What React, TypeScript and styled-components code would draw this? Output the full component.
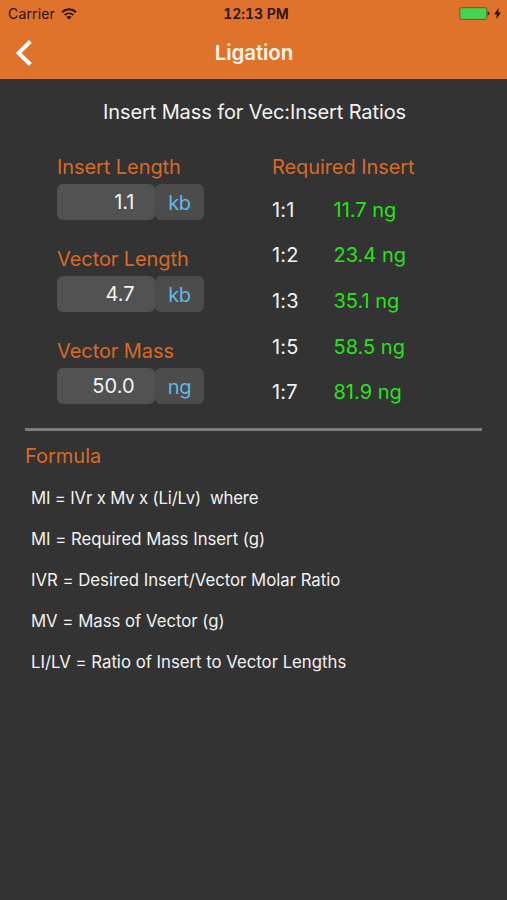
import React from 'react';
import styled, { createGlobalStyle } from 'styled-components';

const colors = {
  bar: '#df732c',
  page: '#333333',
  label: '#d96a26',
  text: '#f2f2f2',
  unit: '#5fb8ea',
  result: '#25e41a',
};

const GlobalStyle = createGlobalStyle`
  * { box-sizing: border-box; }
  body {
    margin: 0;
    background: ${colors.page};
    font-family: Inter, 'Liberation Sans', sans-serif;
    font-size: 20px;
    line-height: 24px;
    color: ${colors.text};
  }
`;

const Screen = styled.div`
  display: flex;
  flex-direction: column;
  width: 507px;
  height: 900px;
  overflow: hidden;
  background: ${colors.page};
`;

const Header = styled.header`
  height: 79px;
  flex: none;
  background: ${colors.bar};
`;

const StatusBar = styled.div`
  display: grid;
  grid-template-columns: 1fr auto 1fr;
  align-items: center;
  height: 27px;
  padding: 0 6px 0 8px;
  font-size: 14px;
  line-height: 18px;
  color: #2a1206;
`;

const Carrier = styled.div`
  display: flex;
  align-items: center;
  gap: 6px;
  letter-spacing: 0.15px;
`;

const Clock = styled.time`
  font-weight: 600;
  letter-spacing: -0.05px;
  font-variant-numeric: tabular-nums;
  padding-left: 3px;
`;

const Power = styled.div`
  display: flex;
  align-items: center;
  justify-content: flex-end;
  gap: 4px;
`;

const NavBar = styled.nav`
  display: grid;
  grid-template-columns: 1fr auto 1fr;
  align-items: center;
  height: 51px;
  padding: 0 15px;
`;

const BackButton = styled.button`
  display: flex;
  justify-self: start;
  padding: 0;
  border: 0;
  background: none;
`;

const NavTitle = styled.h1`
  margin: 0;
  padding-left: 1px;
  font-size: 20.5px;
  font-weight: 600;
  letter-spacing: -0.1px;
  color: #fff6ee;
`;

const Heading = styled.h2`
  margin: 21px 0 0;
  padding-left: 2px;
  font-size: 20px;
  font-weight: 400;
  letter-spacing: -0.1px;
  text-align: center;
`;

const Calculator = styled.section`
  display: grid;
  grid-template-columns: 215px 1fr;
  padding: 31px 0 0 57px;
  height: 304px;
`;

const Inputs = styled.div`
  display: flex;
  flex-direction: column;
  gap: 25.4px;
`;

const Field = styled.label`
  display: flex;
  flex-direction: column;
  gap: 5px;
`;

const Label = styled.span`
  letter-spacing: -0.08px;
  color: ${colors.label};
`;

const FieldRow = styled.span`
  display: flex;
  height: 36.4px;
  margin-bottom: 1px;
`;

const Value = styled.span`
  width: 98px;
  padding: 6px 20.5px 0 0;
  border-radius: 6px;
  background: #525252;
  text-align: right;
`;

const Unit = styled.span`
  width: 49px;
  padding-top: 7px;
  border-radius: 6px;
  background: #4c4c4c;
  color: ${colors.unit};
  text-align: center;
  letter-spacing: -0.3px;
`;

const Results = styled.div`
  display: flex;
  flex-direction: column;
`;

const ResultList = styled.dl`
  display: grid;
  grid-template-columns: 61.5px 1fr;
  grid-auto-rows: 45.6px;
  align-items: center;
  margin: 8px 0 0;
`;

const Ratio = styled.dt`
  letter-spacing: 0.2px;
`;

const Mass = styled.dd`
  margin: 0;
  color: ${colors.result};
`;

const Divider = styled.hr`
  width: 457px;
  height: 2.5px;
  margin: 0 0 0 25.4px;
  border: 0;
  flex: none;
  background: #7c7c7c;
`;

const Formula = styled.section`
  padding: 13px 0 0 25px;
`;

const FormulaTitle = styled.h3`
  margin: 0 0 10.5px;
  font-size: 20px;
  font-weight: 400;
  color: ${colors.label};
`;

const FormulaLine = styled.p<{ $tight?: boolean }>`
  margin: 0;
  padding-left: 6px;
  font-size: 16.75px;
  line-height: 40.9px;
  letter-spacing: ${(p) => (p.$tight ? '-0.17px' : '-0.01px')};
  white-space: pre;
`;

const inputs = [
  { label: 'Insert Length', value: '1.1', unit: 'kb' },
  { label: 'Vector Length', value: '4.7', unit: 'kb' },
  { label: 'Vector Mass', value: '50.0', unit: 'ng' },
];

const results = [
  ['1:1', '11.7 ng'],
  ['1:2', '23.4 ng'],
  ['1:3', '35.1 ng'],
  ['1:5', '58.5 ng'],
  ['1:7', '81.9 ng'],
];

const definitions = [
  'MI = Required Mass Insert (g)',
  'IVR = Desired Insert/Vector Molar Ratio',
  'MV = Mass of Vector (g)',
  'LI/LV = Ratio of Insert to Vector Lengths',
];

const WifiIcon = () => (
  <svg width="16" height="12" viewBox="0 0 16 12" fill="none" stroke="currentColor">
    <path d="M1 4.2C5 .4 11 .4 15 4.2" strokeWidth="2" />
    <path d="M3.6 7C6.2 4.7 9.8 4.7 12.4 7" strokeWidth="1.8" />
    <path d="M8 11.6 5.4 8.9C6.9 7.6 9.1 7.6 10.6 8.9Z" fill="currentColor" stroke="none" />
  </svg>
);

const BatteryIcon = () => (
  <svg width="31" height="13" viewBox="0 0 31 13">
    <rect x="0.8" y="0.6" width="27" height="11.8" rx="1.8" fill="#45d354" stroke="#6b6d1c" strokeWidth="1.1" />
    <path d="M28.6 4.6C31 5 31 8 28.6 8.4Z" fill="#2a1206" />
  </svg>
);

const BoltIcon = () => (
  <svg width="7" height="11" viewBox="0 0 7 11">
    <path d="M4.8 0 0.1 6.2H2.9L2.1 11 6.9 4.6H4.1Z" fill="#1c0c04" />
  </svg>
);

const BackIcon = () => (
  <svg width="18" height="26" viewBox="0 0 18 26" fill="none">
    <path d="M15.4 1.5 3.6 13 15.4 24.5" stroke="#fff" strokeWidth="3.9" />
  </svg>
);

export default function App() {
  return (
    <>
      <GlobalStyle />
      <Screen>
        <Header>
          <StatusBar>
            <Carrier>
              Carrier
              <WifiIcon />
            </Carrier>
            <Clock>12:13 PM</Clock>
            <Power>
              <BatteryIcon />
              <BoltIcon />
            </Power>
          </StatusBar>
          <NavBar>
            <BackButton aria-label="Back">
              <BackIcon />
            </BackButton>
            <NavTitle>Ligation</NavTitle>
          </NavBar>
        </Header>
        <Heading>Insert Mass for Vec:Insert Ratios</Heading>
        <Calculator>
          <Inputs>
            {inputs.map((f) => (
              <Field key={f.label}>
                <Label>{f.label}</Label>
                <FieldRow>
                  <Value>{f.value}</Value>
                  <Unit>{f.unit}</Unit>
                </FieldRow>
              </Field>
            ))}
          </Inputs>
          <Results>
            <Label>Required Insert</Label>
            <ResultList>
              {results.map(([ratio, mass]) => (
                <React.Fragment key={ratio}>
                  <Ratio>{ratio}</Ratio>
                  <Mass>{mass}</Mass>
                </React.Fragment>
              ))}
            </ResultList>
          </Results>
        </Calculator>
        <Divider />
        <Formula>
          <FormulaTitle>Formula</FormulaTitle>
          <FormulaLine $tight>{'MI = IVr x Mv x (Li/Lv)  where'}</FormulaLine>
          {definitions.map((line) => (
            <FormulaLine key={line}>{line}</FormulaLine>
          ))}
        </Formula>
      </Screen>
    </>
  );
}
